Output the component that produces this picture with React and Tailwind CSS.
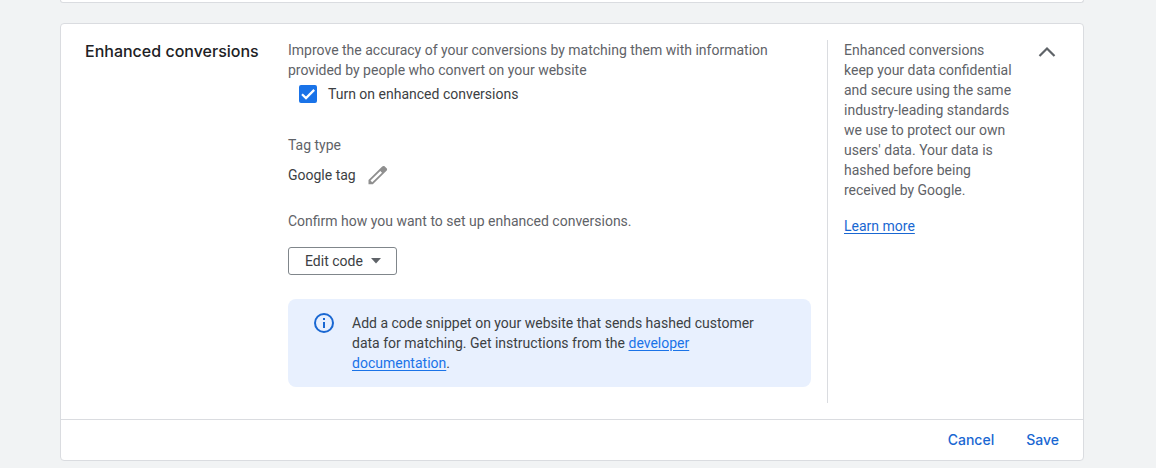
import React from "react";

function CheckBox() {
  return (
    <label htmlFor="enhanced" className="mt-1 ml-[11px] flex h-5 w-fit cursor-pointer items-center gap-[11px] text-[#3c4043]">
      <span className="grid h-[18px] w-[18px]">
        <input
          id="enhanced"
          type="checkbox"
          defaultChecked
          className="peer col-start-1 row-start-1 h-[18px] w-[18px] appearance-none rounded-[2px] border-2 border-[#5f6368] checked:border-[#1a73e8] checked:bg-[#1a73e8]"
        />
        <svg
          viewBox="0 0 18 18"
          className="pointer-events-none col-start-1 row-start-1 h-[18px] w-[18px] opacity-0 peer-checked:opacity-100"
          fill="none"
          stroke="#fff"
          strokeWidth="2.2"
          aria-hidden="true"
        >
          <path d="M3 9.2 7 13.1 15.2 4.9" />
        </svg>
      </span>
      Turn on enhanced conversions
    </label>
  );
}

export default function App() {
  return (
    <div className="min-h-screen bg-[#f1f3f4] pr-[72px] pb-[7px] pl-[60px] font-['Roboto',sans-serif] text-[14px] leading-5 text-[#5f6368]">
      <div className="h-[3px] rounded-b border border-t-0 border-[#dadce0] bg-white" />
      <section className="mt-5 rounded border border-[#dadce0] bg-white">
        <div className="flex py-4 pl-6">
          <h2 className="w-[203px] shrink-0 pt-px font-['Inter',sans-serif] text-[16px] leading-5 font-medium text-[#202124]">
            Enhanced conversions
          </h2>
          <div className="min-w-0 flex-1 pr-4 pb-4">
            <p className="max-w-[510px]">
              Improve the accuracy of your conversions by matching them with information provided by people who convert on
              your website
            </p>
            <CheckBox />
            <h3 className="mt-[31px]">Tag type</h3>
            <div className="mt-[10px] flex h-5 items-center gap-[10px] text-[#3c4043]">
              Google tag
              <button type="button" aria-label="Edit tag type" className="cursor-pointer">
                <svg viewBox="0 0 24 24" className="h-6 w-6" fill="#8f8f8f" aria-hidden="true">
                  <path
                    fillRule="evenodd"
                    d="M20.600 5.200 18.800 3.400c-.8-.7-1.900-.6-2.600.1L2.500 17V21.300h4.300L20.500 7.800c.8-.8.8-1.900.1-2.600ZM14.300 8l1.700 1.700L6.200 19.300l-1.700-1.700L14.300 8Z"
                  />
                </svg>
              </button>
            </div>
            <p className="mt-[26px]">Confirm how you want to set up enhanced conversions.</p>
            <button
              type="button"
              aria-haspopup="listbox"
              className="mt-4 flex h-7 cursor-pointer items-center gap-2 rounded-[3px] border border-[#80868b] pr-[15px] pl-4 text-[#3c4043]"
            >
              Edit code
              <svg viewBox="0 0 10 6" className="h-[6px] w-[10px]" fill="#5f6368" aria-hidden="true">
                <path d="M0 0h10L5 5.5Z" />
              </svg>
            </button>
            <div className="mt-6 flex gap-4 rounded-lg bg-[#e8f0fe] py-[14px] pr-10 pl-6 text-[#3c4043]">
              <svg viewBox="0 0 24 24" className="-mt-[2px] h-6 w-6 shrink-0" fill="#1967d2" aria-hidden="true">
                <path d="M11 7h2v2h-2V7Zm0 4h2v6h-2v-6Zm1-9a10 10 0 1 0 0 20 10 10 0 0 0 0-20Zm0 18a8 8 0 1 1 0-16 8 8 0 0 1 0 16Z" />
              </svg>
              <p>
                Add a code snippet on your website that sends hashed customer data for matching. Get instructions from the{" "}
                <a href="#docs" className="text-[#1a73e8] underline underline-offset-2">
                  developer documentation
                </a>
                .
              </p>
            </div>
          </div>
          <aside className="w-[256px] shrink-0 border-l border-[#dadce0] pl-4">
            <div className="flex justify-between pr-6">
              <div className="w-[170px]">
                <p>
                  Enhanced conversions keep your data confidential and secure using the same industry-leading standards we
                  use to protect our own users' data. Your data is hashed before being received by Google.
                </p>
                <a href="#learn" className="mt-4 block w-fit text-[#1967d2] underline underline-offset-2">
                  Learn more
                </a>
              </div>
              <button type="button" aria-label="Collapse section" className="h-6 w-6 cursor-pointer">
                <svg viewBox="0 0 24 24" className="h-6 w-6" fill="none" stroke="#5f6368" strokeWidth="2.2" aria-hidden="true">
                  <path d="M4.500 16 12 8.500 19.500 16" />
                </svg>
              </button>
            </div>
          </aside>
        </div>
        <div className="flex h-[41px] items-center justify-end gap-8 border-t border-[#dadce0] pr-6 font-['Inter',sans-serif] text-[14px] font-medium text-[#1967d2]">
          <button type="button" className="cursor-pointer">Cancel</button>
          <button type="button" className="cursor-pointer">Save</button>
        </div>
      </section>
    </div>
  );
}
